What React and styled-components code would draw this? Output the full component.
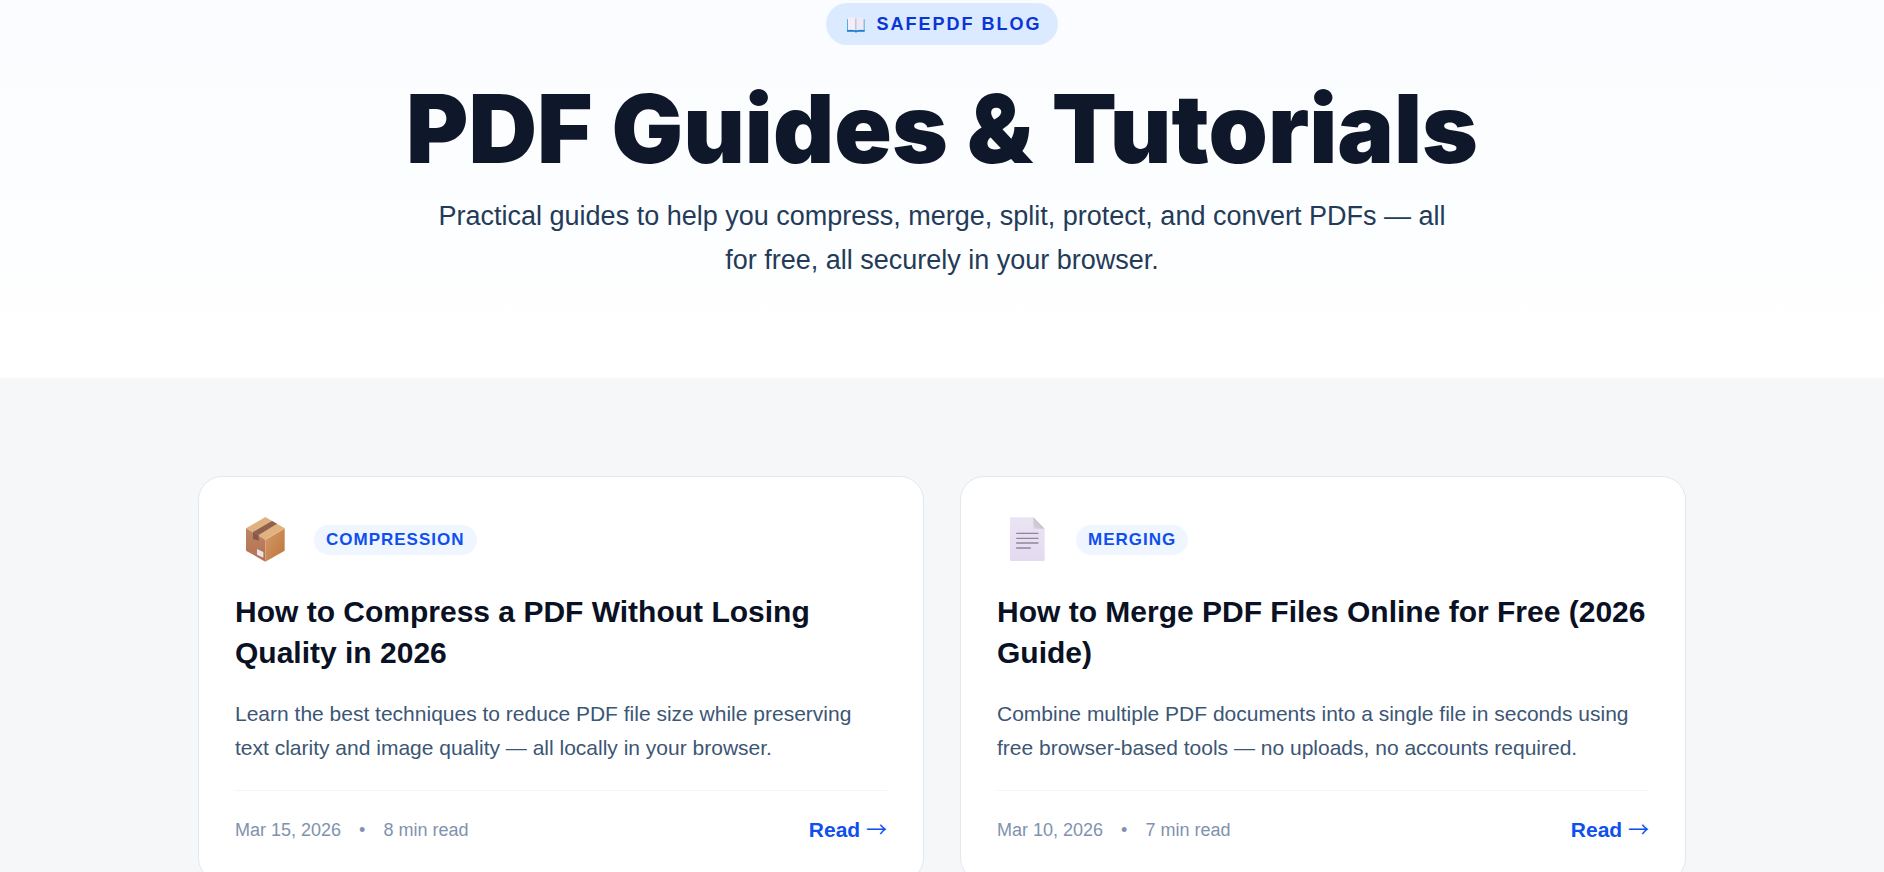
import React from 'react';
import styled, { createGlobalStyle } from 'styled-components';

const GlobalStyle = createGlobalStyle`
  * {
    box-sizing: border-box;
  }

  body {
    margin: 0;
    background-color: #f6f7f9;
    font-family: "Liberation Sans", Arial, sans-serif;
    color: #0f172a;
  }
`;

const Hero = styled.header`
  display: flex;
  flex-direction: column;
  align-items: center;
  padding: 3px 24px 96px;
  background: linear-gradient(180deg, #fafcff 0%, #ffffff 100%);
  text-align: center;
`;

const Badge = styled.span`
  display: inline-flex;
  align-items: center;
  gap: 10px;
  height: 42px;
  padding: 0 16px 0 20px;
  border-radius: 21px;
  background-color: #dbeafe;
  color: #0a36d6;
  font-size: 18px;
  font-weight: bold;
  letter-spacing: 2px;
  text-transform: uppercase;
`;

const Title = styled.h1`
  margin: 32px 0 13px;
  font-family: Inter, "Arial Black", sans-serif;
  font-size: 95px;
  font-weight: 900;
  line-height: 104px;
`;

const Subtitle = styled.p`
  max-width: 1040px;
  margin: 0;
  color: #233b58;
  font-size: 27px;
  line-height: 44px;
`;

const Section = styled.main`
  padding: 98px 24px;
`;

const Grid = styled.div`
  display: grid;
  grid-template-columns: repeat(2, 1fr);
  gap: 36px;
  max-width: 1488px;
  margin: 0 auto;

  @media (max-width: 900px) {
    grid-template-columns: 1fr;
  }
`;

const Card = styled.article`
  display: flex;
  flex-direction: column;
  padding: 36px;
  border: 1px solid #e2e8f0;
  border-radius: 24px;
  background-color: #ffffff;
`;

const CardTop = styled.div`
  display: flex;
  align-items: center;
  gap: 19px;
  margin-bottom: 24px;
`;

const Tag = styled.span`
  padding: 0 12px;
  border-radius: 15px;
  background-color: #eff6ff;
  color: #0f4fee;
  font-size: 17px;
  font-weight: bold;
  line-height: 30px;
  letter-spacing: 1px;
  text-transform: uppercase;
`;

const CardTitle = styled.h2`
  margin: 0 0 24px;
  color: #0a1124;
  font-size: 30px;
  line-height: 41px;
`;

const Excerpt = styled.p`
  margin: 0 0 25px;
  color: #3c5675;
  font-size: 21px;
  line-height: 34px;
`;

const CardFooter = styled.footer`
  display: flex;
  align-items: center;
  justify-content: space-between;
  padding-top: 24px;
  border-top: 1px solid #f1f5f9;
`;

const Meta = styled.div`
  display: flex;
  gap: 18px;
  color: #7f92ae;
  font-size: 18px;
  line-height: 30px;
`;

const ReadLink = styled.a`
  color: #0f4fee;
  font-size: 21px;
  font-weight: bold;
  line-height: 30px;
  text-decoration: none;
`;

const Arrow = styled.span`
  font-family: "Noto Sans CJK JP", sans-serif;
  font-weight: normal;
  line-height: 1;
`;

const BookIcon = () => (
  <svg width="20" height="18" viewBox="0 0 60 54" aria-hidden="true">
    <path d="M3 13h53v36H34l-4 3-4-3H3z" fill="#4bb0e6" />
    <path d="M3 45h53v5H34l-4 3-4-3H3z" fill="#1f7fca" />
    <path d="M6 9q12-3 23 1v36q-11-3-23-1z" fill="#f4eef9" />
    <path d="M53 9q-12-3-23 1v36q11-3 23-1z" fill="#efe9f6" />
    <path d="M30 10v37" stroke="#b9aecb" strokeWidth="2" />
  </svg>
);

const BoxIcon = () => (
  <svg width="60" height="54" viewBox="-3 21 180 162" aria-hidden="true">
    <defs>
      <linearGradient id="boxLeft" x1="0" y1="0" x2="0" y2="1">
        <stop offset="0" stopColor="#bd8566" />
        <stop offset="1" stopColor="#b4704e" />
      </linearGradient>
      <linearGradient id="boxRight" x1="0" y1="0" x2="1" y2="1">
        <stop offset="0" stopColor="#d39a6c" />
        <stop offset="1" stopColor="#bd7637" />
      </linearGradient>
    </defs>
    <path d="M88 33l58 34-58 34-58-34z" fill="#dfb27f" />
    <path d="M30 67l58 34v66l-58-33z" fill="url(#boxLeft)" />
    <path d="M146 67l-58 34v66l58-33z" fill="url(#boxRight)" />
    <path d="M88 101l58-34" stroke="#efc391" strokeWidth="2" />
    <path d="M108 45l15 8-55 34-17-9z" fill="#8f5f50" />
    <path d="M51 78l17 9v18l-8-4-9-1z" fill="#86584d" />
    <path d="M63 129l19 9v17l-19-9z" fill="#e9e2ef" />
  </svg>
);

const DocumentIcon = () => (
  <svg width="60" height="54" viewBox="-9 21 180 162" aria-hidden="true">
    <defs>
      <linearGradient id="paper" x1="0" y1="0" x2="0" y2="1">
        <stop offset="0" stopColor="#ebe4f3" />
        <stop offset="1" stopColor="#e3daf0" />
      </linearGradient>
      <linearGradient id="fold" x1="0" y1="1" x2="1" y2="0">
        <stop offset="0" stopColor="#d9d3df" />
        <stop offset="1" stopColor="#b9b3c0" />
      </linearGradient>
    </defs>
    <path d="M33 34h67l34 34v94q0 3-3 3H33q-3 0-3-3V37q0-3 3-3z" fill="url(#paper)" />
    <path d="M100 34l34 34h-31q-3 0-3-3z" fill="url(#fold)" />
    <path d="M50 82h64M50 97h64M50 111h64M50 126h41" stroke="#8f8799" strokeWidth="4" strokeLinecap="round" />
  </svg>
);

const posts = [
  {
    id: 1,
    icon: <BoxIcon />,
    tag: 'Compression',
    title: 'How to Compress a PDF Without Losing Quality in 2026',
    excerpt: 'Learn the best techniques to reduce PDF file size while preserving text clarity and image quality — all locally in your browser.',
    date: 'Mar 15, 2026',
    time: '8 min read',
  },
  {
    id: 2,
    icon: <DocumentIcon />,
    tag: 'Merging',
    title: 'How to Merge PDF Files Online for Free (2026 Guide)',
    excerpt: 'Combine multiple PDF documents into a single file in seconds using free browser-based tools — no uploads, no accounts required.',
    date: 'Mar 10, 2026',
    time: '7 min read',
  },
];

const App = () => {
  return (
    <>
      <GlobalStyle />
      <Hero>
        <Badge>
          <BookIcon />
          SafePDF Blog
        </Badge>
        <Title>PDF Guides &amp; Tutorials</Title>
        <Subtitle>
          Practical guides to help you compress, merge, split, protect, and convert PDFs — all for free, all securely in your browser.
        </Subtitle>
      </Hero>
      <Section>
        <Grid>
          {posts.map((post) => (
            <Card key={post.id}>
              <CardTop>
                {post.icon}
                <Tag>{post.tag}</Tag>
              </CardTop>
              <CardTitle>{post.title}</CardTitle>
              <Excerpt>{post.excerpt}</Excerpt>
              <CardFooter>
                <Meta>
                  <span>{post.date}</span>
                  <span>•</span>
                  <span>{post.time}</span>
                </Meta>
                <ReadLink href="#">
                  Read <Arrow>→</Arrow>
                </ReadLink>
              </CardFooter>
            </Card>
          ))}
        </Grid>
      </Section>
    </>
  );
};

export default App;
